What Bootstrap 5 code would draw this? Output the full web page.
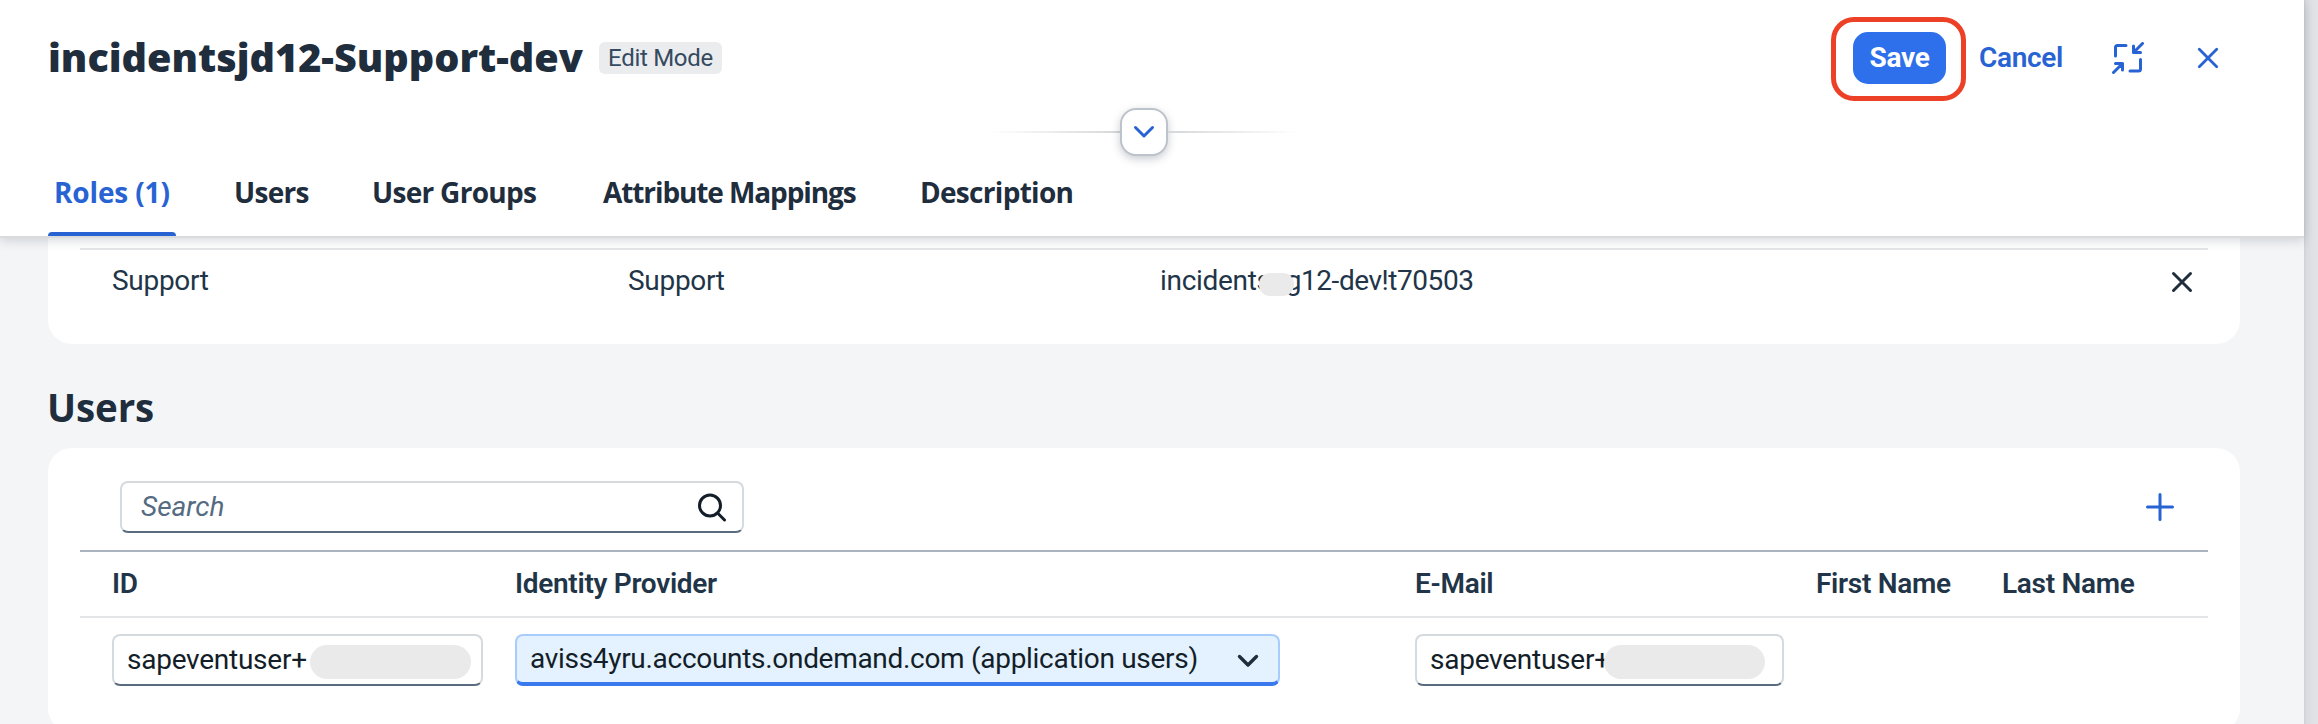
<!DOCTYPE html>
<html lang="en">
<head>
<meta charset="utf-8">
<title>incidentsjd12-Support-dev</title>
<link href="https://cdn.jsdelivr.net/npm/bootstrap@5.3.0/dist/css/bootstrap.min.css" rel="stylesheet">
<style>
  body { font-family: Roboto, sans-serif; font-size: 28px; color: #223548; width: 2318px; height: 724px; overflow: hidden; background: #f4f5f7; letter-spacing: -.3px; white-space: nowrap; }
  .main-col { width: 2304px; height: 724px; background: #f4f5f7; }
  .side-strip { width: 14px; background: linear-gradient(90deg, #cdd0d5 0, #d8dadf 2px, #dfe1e5 8px, #e1e3e7 14px); }
  .page-head { background: #fff; height: 238px; border-bottom: 2px solid #d9dbdc; box-shadow: 0 3px 10px rgba(34,53,72,.18); z-index: 2; }
  .title-row { height: 108px; padding: 8px 84px 0 48px; }
  .title-row h1 { font: 900 39.6px/52px "Open Sans", sans-serif; letter-spacing: 0; padding-bottom: 3px; width: 551px; color: #202d3d; }
  .mode-tag { font-size: 24px; line-height: 33px; height: 32px; width: 123px; border-radius: 6px; background: #eaecee; color: #354a5f; letter-spacing: -.3px; }
  .save-frame { width: 135px; height: 84px; border: 5px solid #ec4127; border-radius: 23px; margin-top: 1px; }
  .btn-save { width: 93px; height: 52px; margin: -2px 0 0 2px; padding: 0; border: 0; border-radius: 15px; background: #2e6fec; color: #fff; font-size: 28px; font-weight: 700; line-height: 50px; letter-spacing: -.3px; }
  .btn-save:hover { background: #2e6fec; color: #fff; }
  .btn-cancel { width: 100px; margin-left: 5px; color: #2863d4; font-weight: 600; line-height: 51px; padding-bottom: 2px; text-align: center; }
  .divider-row { height: 48px; }
  .fade-line { width: 130px; height: 2px; }
  .fade-l { background: linear-gradient(90deg, #fff, #d5d7d9); }
  .fade-r { background: linear-gradient(270deg, #fff, #d5d7d9); }
  .btn-expand { width: 48px; height: 48px; border: 2px solid #bcc3ca; border-radius: 16px; background: #fff; box-shadow: 0 3px 8px rgba(34,53,72,.25); }
  .tab-row { height: 80px; padding-left: 48px; }
  .tab-item { height: 80px; line-height: 73px; font-family: "Open Sans", sans-serif; font-weight: 700; color: #202d3d; position: relative; padding: 0 0 0 6px; letter-spacing: -.7px; }
  .tab-item.active { color: #2863d4; letter-spacing: -.15px; }
  .tab-item.tight { letter-spacing: -1.1px; }
  .tab-item.active::after { content: ""; position: absolute; left: 0; bottom: 0; width: 128px; height: 4px; background: #2863d4; border-radius: 4px 4px 0 0; }
  .panel-box { background: #fff; margin-left: 48px; width: 2192px; padding: 0 32px; }
  .panel-roles { height: 106px; padding-top: 10px; border-radius: 0 0 24px 24px; }
  .panel-users { height: 284px; border-radius: 24px; }
  .grid-roles { display: grid; grid-template-columns: 516px 532px 1012px auto; padding-left: 32px; border-top: 2px solid #e4e5e6; line-height: 61px; }
  .grid-users { display: grid; grid-template-columns: 403px 900px 401px 186px auto; padding-left: 32px; }
  .grid-labels { height: 68px; border-top: 2px solid #a9b4be; border-bottom: 2px solid #e4e5e6; line-height: 63px; font-weight: 600; }
  .section-title { font: 700 38.5px/82px "Open Sans", sans-serif; letter-spacing: -.1px; margin: 22px 0 0 47px; color: #202d3d; }
  .tool-row { height: 102px; padding: 33px 32px 0 40px; }
  .field-box { height: 52px; border: 2px solid #d5dadf; border-bottom-color: #5b6b7f; border-radius: 8px; background: #fff; line-height: 47px; padding-left: 13px; color: #131e29; position: relative; letter-spacing: -.25px; }
  .field-search { width: 624px; padding: 0 14px 2px 19px; color: #556b82; }
  .field-search em { letter-spacing: 0; }
  .field-select { width: 765px; background: #e3f2fe; border-color: #a9cdfb; border-bottom: 4px solid #3a78ee; line-height: 48px; letter-spacing: -.3px; padding-right: 18px; }
  .mask { position: absolute; background: #eaeaea; }
  .mask-field { width: 161px; height: 34px; top: 9px; border-radius: 17px; }
  .mask-app { width: 35px; height: 23px; left: 99px; top: 23px; border-radius: 11px; }
  .app-tail { margin-left: 15px; letter-spacing: -.45px; }
  svg { fill: none; stroke-linecap: round; stroke-linejoin: round; flex: none; }
</style>
</head>
<body>
<div class="d-flex">
  <main class="main-col">
    <header class="page-head position-relative">
      <div class="title-row d-flex align-items-center">
        <h1 class="m-0">incidentsjd12-Support-dev</h1>
        <span class="mode-tag text-center">Edit Mode</span>
        <div class="ms-auto d-flex align-items-center">
          <div class="save-frame d-flex align-items-center justify-content-center"><button class="btn btn-save">Save</button></div>
          <span class="btn-cancel">Cancel</span>
          <svg style="margin-left:41px" width="32" height="32" viewBox="0 0 32 32" stroke="#2863d4" stroke-width="3"><path d="M3.500 14V5.500Q3.500 3.500 5.500 3.500H14M28.500 17.500V27Q28.500 29 26.500 29H18M30.500 1.500L21.500 10.500M21.500 4V10.500H28.500M1.500 30.500L10.500 21.500M3.500 21.500H10.500V28"/></svg>
          <svg style="margin-left:52px" width="24" height="24" viewBox="0 0 24 24" stroke="#2863d4" stroke-width="2.800"><path d="M3.300 3.300L20.700 20.700M20.700 3.300L3.300 20.700"/></svg>
        </div>
      </div>
      <div class="divider-row d-flex align-items-center" style="padding-left:990px">
        <div class="fade-line fade-l"></div>
        <div class="btn-expand d-flex align-items-center justify-content-center"><svg width="22" height="14" viewBox="0 0 22 14" stroke="#2863d4" stroke-width="3"><path d="M2.500 2.500L11 11L19.500 2.500"/></svg></div>
        <div class="fade-line fade-r"></div>
      </div>
      <nav class="tab-row d-flex">
        <div class="tab-item active" style="width:180px">Roles (1)</div>
        <div class="tab-item" style="width:138px">Users</div>
        <div class="tab-item" style="width:231px">User Groups</div>
        <div class="tab-item tight" style="width:317px">Attribute Mappings</div>
        <div class="tab-item">Description</div>
      </nav>
    </header>

    <section class="panel-box panel-roles">
      <div class="grid-roles">
        <span>Support</span><span>Support</span>
        <span class="position-relative">incidents<span class="app-tail">g12-dev!t70503</span><i class="mask mask-app"></i></span>
        <span class="d-flex align-items-center"><svg style="margin-top:3px;margin-left:-2px" width="24" height="24" viewBox="0 0 24 24" stroke="#202d3d" stroke-width="3"><path d="M3.500 3.500L20.500 20.500M20.500 3.500L3.500 20.500"/></svg></span>
      </div>
    </section>

    <h2 class="section-title mb-0">Users</h2>

    <section class="panel-box panel-users">
      <div class="tool-row d-flex justify-content-between">
        <div class="field-box field-search d-flex justify-content-between align-items-center"><em>Search</em>
          <svg width="32" height="32" viewBox="0 0 32 32" stroke="#131e29" stroke-width="3"><circle cx="14" cy="15.500" r="10.500"/><path d="M21.800 23.300L28.500 30"/></svg>
        </div>
        <svg style="margin-top:11px" width="32" height="30" viewBox="0 0 32 30" stroke="#2863d4" stroke-width="3"><path d="M16 2.500V27.500M3.500 15H28.500"/></svg>
      </div>
      <div class="grid-users grid-labels">
        <span>ID</span><span>Identity Provider</span><span>E-Mail</span><span>First Name</span><span>Last Name</span>
      </div>
      <div class="grid-users pt-3">
        <div><div class="field-box" style="width:371px">sapeventuser+<i class="mask mask-field" style="left:196px"></i></div></div>
        <div><div class="field-box field-select d-flex justify-content-between align-items-center"><span>aviss4yru.accounts.ondemand.com (application users)</span>
          <svg style="margin-top:4px" width="24" height="16" viewBox="0 0 24 16" stroke="#202d3d" stroke-width="3.400"><path d="M3.500 3.500L12 12L20.500 3.500"/></svg></div></div>
        <div><div class="field-box" style="width:369px">sapeventuser+<i class="mask mask-field" style="left:187px"></i></div></div>
      </div>
    </section>
  </main>
  <aside class="side-strip"></aside>
</div>
<script src="https://cdn.jsdelivr.net/npm/bootstrap@5.3.0/dist/js/bootstrap.bundle.min.js"></script>
</body>
</html>
